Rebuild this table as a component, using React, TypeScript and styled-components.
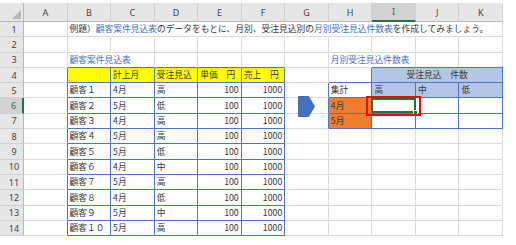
import React from 'react';
import styled, { createGlobalStyle } from 'styled-components';

const GlobalStyle = createGlobalStyle`
  html, body { margin: 0; padding: 0; background: #ffffff; }
  body { font-family: "Noto Sans CJK JP", "Noto Sans", sans-serif; }
`;

const BLUE = '#4a76c6';
const GRID = '#dcdcdc';
const HEAD_BG = '#e6e6e6';
const HEAD_SEP = '#d0d0d0';
const HEAD_EDGE = '#b8b8b8';
const SEL_BG = '#d2d2d2';
const GREEN = '#217346';
const TEXT_BLUE = '#4472c4';
const YELLOW = '#ffff00';
const LIGHT_BLUE = '#b4c6e7';
const ORANGE = '#ed7d31';

const Page = styled.div`
  width: 516px;
  height: 245px;
  padding-top: 3px;
  box-sizing: border-box;
  overflow: hidden;
`;

const Sheet = styled.div`
  display: grid;
  grid-template-columns: 24px repeat(11, 43.55px);
  grid-template-rows: 19px repeat(14, 15.3px);
  width: 503px;
  font-size: 8.75px;
  color: #383838;
`;

const Corner = styled.div`
  position: relative;
  background: ${HEAD_BG};
  border-right: 1px solid ${HEAD_EDGE};
  border-bottom: 1px solid ${HEAD_EDGE};
  box-sizing: border-box;
  &::after {
    content: '';
    position: absolute;
    right: 2px;
    bottom: 2px;
    width: 0;
    height: 0;
    border-left: 9px solid transparent;
    border-bottom: 9px solid #b5b5b5;
  }
`;

const ColHead = styled.div<{ $sel?: boolean }>`
  display: flex;
  align-items: center;
  justify-content: center;
  box-sizing: border-box;
  background: ${(p) => (p.$sel ? SEL_BG : HEAD_BG)};
  border-right: 1px solid ${HEAD_SEP};
  border-bottom: ${(p) => (p.$sel ? `2px solid ${GREEN}` : `1px solid ${HEAD_EDGE}`)};
  color: ${(p) => (p.$sel ? GREEN : '#444444')};
  font-family: "Noto Sans", "DejaVu Sans", sans-serif;
  font-size: 9px;
`;

const RowHead = styled.div<{ $sel?: boolean }>`
  display: flex;
  align-items: center;
  justify-content: center;
  padding-left: 5px;
  box-sizing: border-box;
  background: ${(p) => (p.$sel ? SEL_BG : HEAD_BG)};
  border-right: ${(p) => (p.$sel ? `2px solid ${GREEN}` : `1px solid ${HEAD_EDGE}`)};
  border-bottom: 1px solid ${HEAD_SEP};
  color: ${(p) => (p.$sel ? GREEN : '#444444')};
  font-family: "Noto Sans", "DejaVu Sans", sans-serif;
  font-size: 9px;
`;

const Cell = styled.div<{
  $span: number;
  $bg: string;
  $align: 'left' | 'right' | 'center';
  $color: string;
  $rb: string;
  $bb: string;
  $top?: string;
  $over?: boolean;
}>`
  grid-column: span ${(p) => p.$span};
  position: relative;
  z-index: ${(p) => (p.$over ? 2 : 0)};
  display: flex;
  align-items: center;
  justify-content: ${(p) =>
    p.$align === 'right' ? 'flex-end' : p.$align === 'center' ? 'center' : 'flex-start'};
  box-sizing: border-box;
  padding: 1px 2px 0 2px;
  background: ${(p) => p.$bg};
  color: ${(p) => p.$color};
  border-right: 1px solid ${(p) => p.$rb};
  border-bottom: 1px solid ${(p) => p.$bb};
  box-shadow: ${(p) => (p.$top ? `0 -1px 0 ${p.$top}` : 'none')};
  white-space: pre;
  overflow: ${(p) => (p.$over ? 'visible' : 'hidden')};
  line-height: 1;
`;

const Blue = styled.span`
  color: ${TEXT_BLUE};
`;

const Arrow = styled.svg`
  width: 17px;
  height: 21px;
  flex: none;
  margin-top: 1px;
`;

/* active-cell frame, drawn over cell I6 */
const Selection = styled.div`
  position: absolute;
  inset: -0.5px -1.4px -0.2px -1px;
  box-sizing: border-box;
  border: 2px solid ${GREEN};
  &::after {
    content: '';
    position: absolute;
    right: -4px;
    bottom: -4px;
    width: 5px;
    height: 5px;
    background: ${GREEN};
    border: 1px solid #ffffff;
    box-sizing: border-box;
  }
`;

/* red annotation box around cell I6 */
const RedBox = styled.div`
  position: absolute;
  inset: -2.5px -6.4px -3.7px -6px;
  box-sizing: border-box;
  border: 2px solid #ff0000;
`;

type Def = {
  text?: React.ReactNode;
  span?: number;
  bg?: string;
  align?: 'left' | 'right' | 'center';
  color?: string;
  top?: boolean;
  active?: boolean;
  arrow?: boolean;
};

const COLS = ['A', 'B', 'C', 'D', 'E', 'F', 'G', 'H', 'I', 'J', 'K'];
const SEL_COL = 8;
const SEL_ROW = 6;

const data: [string, string, string][] = [
  ['顧客１', '4月', '高'],
  ['顧客２', '5月', '低'],
  ['顧客３', '4月', '高'],
  ['顧客４', '5月', '高'],
  ['顧客５', '5月', '低'],
  ['顧客６', '4月', '中'],
  ['顧客７', '5月', '高'],
  ['顧客８', '4月', '低'],
  ['顧客９', '5月', '中'],
  ['顧客１０', '5月', '高'],
];

const defs: Record<string, Def> = {
  '1,1': {
    span: 10,
    text: (
      <>
        例題）<Blue>顧客案件見込表</Blue>のデータをもとに、月別、受注見込別の
        <Blue>月別受注見込件数表</Blue>を作成してみましょう。
      </>
    ),
  },
  '3,1': { span: 2, text: '顧客案件見込表', color: TEXT_BLUE },
  '3,7': { span: 2, text: '月別受注見込件数表', color: TEXT_BLUE },
  '4,1': { bg: YELLOW },
  '4,2': { bg: YELLOW, text: '計上月' },
  '4,3': { bg: YELLOW, text: '受注見込' },
  '4,4': { bg: YELLOW, text: '単価　円' },
  '4,5': { bg: YELLOW, text: '売上　円' },
  '4,8': { span: 3, bg: LIGHT_BLUE, text: '受注見込　件数', align: 'center', top: true },
  '5,7': { text: '集計' },
  '5,8': { bg: LIGHT_BLUE, text: '高' },
  '5,9': { bg: LIGHT_BLUE, text: '中' },
  '5,10': { bg: LIGHT_BLUE, text: '低' },
  '6,6': { arrow: true, align: 'center' },
  '6,7': { bg: ORANGE, text: '4月' },
  '6,8': { active: true },
  '7,7': { bg: ORANGE, text: '5月' },
};

data.forEach(([name, month, level], i) => {
  const r = 5 + i;
  defs[`${r},1`] = { text: name };
  defs[`${r},2`] = { text: month };
  defs[`${r},3`] = { text: level };
  defs[`${r},4`] = { text: '100', align: 'right' };
  defs[`${r},5`] = { text: '1000', align: 'right' };
});

const inTable = (r: number, c: number) =>
  (r >= 4 && r <= 14 && c >= 1 && c <= 5) ||
  (r === 4 && c >= 8 && c <= 10) ||
  (r >= 5 && r <= 7 && c >= 7 && c <= 10);

const rightColor = (r: number, c: number) =>
  inTable(r, c) || inTable(r, c + 1) ? BLUE : GRID;

const bottomColor = (r: number, c0: number, span: number) => {
  for (let c = c0; c < c0 + span; c++) {
    if (!(inTable(r, c) || inTable(r + 1, c))) return GRID;
  }
  return BLUE;
};

function Row({ r }: { r: number }) {
  const cells: React.ReactNode[] = [];
  let c = 0;
  while (c < COLS.length) {
    const d = defs[`${r},${c}`] || {};
    const span = d.span || 1;
    cells.push(
      <Cell
        key={c}
        $span={span}
        $bg={d.bg || '#ffffff'}
        $align={d.align || 'left'}
        $color={d.color || '#383838'}
        $rb={rightColor(r, c + span - 1)}
        $bb={bottomColor(r, c, span)}
        $top={d.top ? BLUE : undefined}
        $over={d.active || d.arrow}
      >
        {d.text}
        {d.arrow && (
          <Arrow viewBox="0 0 17 21">
            <polygon
              points="0.5,0.5 10.5,0.5 16.5,10.5 10.5,20.5 0.5,20.5"
              fill="#4472c4"
              stroke="#2f5597"
              strokeWidth="0.8"
            />
          </Arrow>
        )}
        {d.active && (
          <>
            <Selection />
            <RedBox />
          </>
        )}
      </Cell>
    );
    c += span;
  }
  return (
    <>
      <RowHead $sel={r === SEL_ROW}>{r}</RowHead>
      {cells}
    </>
  );
}

export default function App() {
  const rows = Array.from({ length: 14 }, (_, i) => i + 1);
  return (
    <>
      <GlobalStyle />
      <Page>
        <Sheet>
          <Corner />
          {COLS.map((col, i) => (
            <ColHead key={col} $sel={i === SEL_COL}>
              {col}
            </ColHead>
          ))}
          {rows.map((r) => (
            <Row key={r} r={r} />
          ))}
        </Sheet>
      </Page>
    </>
  );
}
